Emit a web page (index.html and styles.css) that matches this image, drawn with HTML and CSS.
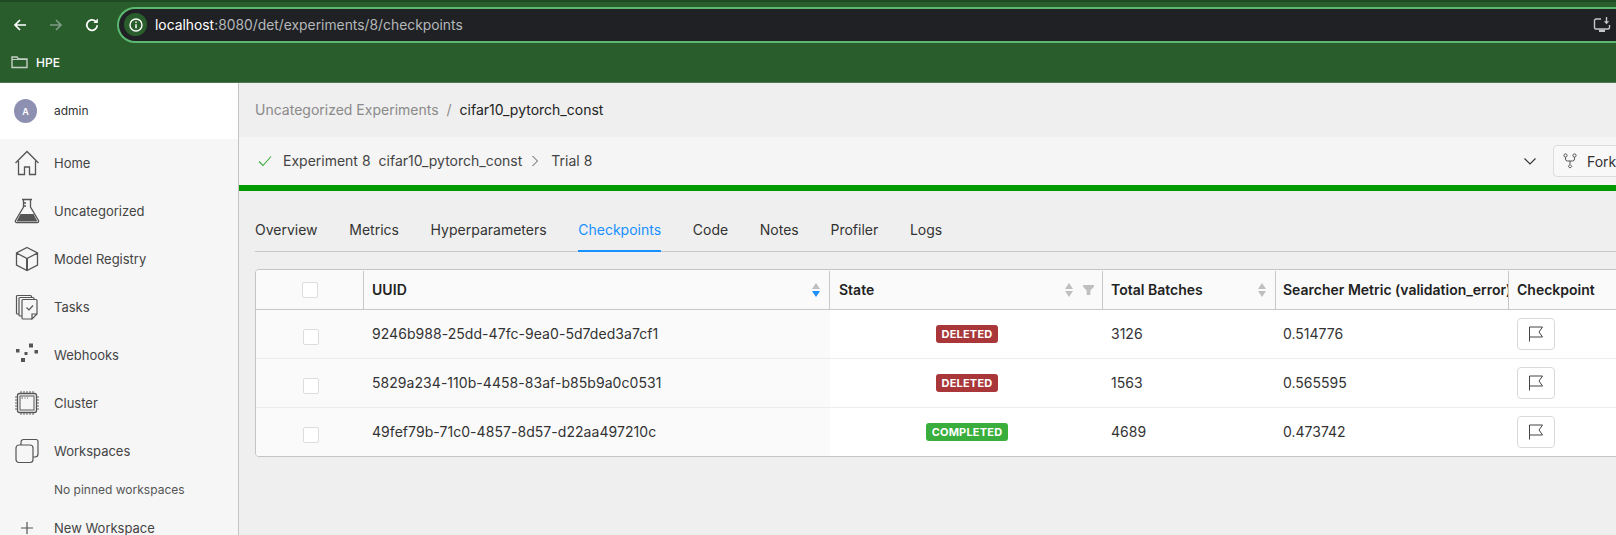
FILE: index.html
```html
<!DOCTYPE html>
<html>
<head>
    <link rel="stylesheet" href="styles.css">
</head>
<body>
    <div class="chrome">
        <div class="toolbar">
            <svg class="nav-btn back" width="16" height="16" viewBox="0 0 16 16"><path d="M14 8H3M8 3L3 8l5 5" fill="none" stroke="#fff" stroke-width="1.7"/></svg>
            <svg class="nav-btn forward" width="16" height="16" viewBox="0 0 16 16"><path d="M2 8h11M8 3l5 5-5 5" fill="none" stroke="#7f9c84" stroke-width="1.7"/></svg>
            <svg class="nav-btn reload" width="16" height="16" viewBox="0 0 16 16"><path d="M13.2 8.2A5.2 5.2 0 1 1 11.6 4.3" fill="none" stroke="#fff" stroke-width="1.7"/><path d="M9.4 5.9h4.4V1.5z" fill="#fff"/></svg>
            <div class="address">
                <span class="site-info">
                    <svg width="16" height="16" viewBox="0 0 16 16"><circle cx="8" cy="8" r="6" fill="none" stroke="#fff" stroke-width="1.4"/><path d="M8 7.2v4M8 4.6v1.5" stroke="#fff" stroke-width="1.5"/></svg>
                </span>
                <span class="url"><b>localhost</b>:8080/det/experiments/8/checkpoints</span>
                <svg class="install" width="18" height="16" viewBox="0 0 18 16"><path d="M8 2H3a1.5 1.5 0 0 0-1.5 1.5v7A1.5 1.5 0 0 0 3 12h12a1.5 1.5 0 0 0 1.500-1.500V8" fill="none" stroke="#c4c6c8" stroke-width="1.4"/><path d="M6 12.500h6V15H6z" fill="#c4c6c8"/><path d="M13.500 0v5" stroke="#c4c6c8" stroke-width="1.400"/><path d="M10.800 4.300h5.400l-2.700 3z" fill="#c4c6c8"/></svg>
            </div>
        </div>
        <div class="bookmarks">
            <svg width="17" height="14" viewBox="0 0 17 14"><path d="M1 12.500V2h5l1.500 2H16v8.500z" fill="none" stroke="#c5cfc6" stroke-width="1.400"/><path d="M1 4.500h15" stroke="#c5cfc6" stroke-width="1"/></svg>
            <span>HPE</span>
        </div>
    </div>

    <div class="app">
        <aside class="sidebar">
            <div class="user">
                <span class="avatar">A</span>
                <span class="user-name">admin</span>
            </div>
            <nav class="side-nav">
                <a class="side-item" href="#">
                    <svg width="26" height="26" viewBox="0 0 26 26"><path d="M1.500 13L13 1.500 24.500 13M4.500 11v13.500h6V17h5v7.500h6V11" fill="none" stroke="#555" stroke-width="1.300"/></svg>
                    Home
                </a>
                <a class="side-item" href="#">
                    <svg width="26" height="26" viewBox="0 0 26 26"><path d="M8 1.500h10M9.500 1.500V9L1.500 22.500a1.500 1.500 0 0 0 1.300 2.200h20.400a1.500 1.500 0 0 0 1.300-2.200L16.500 9V1.500M9.500 5h2.500M9.500 8h2.500" fill="none" stroke="#555" stroke-width="1.300"/><path d="M6.500 16h13l4 7.500H2.500z" fill="#555"/></svg>
                    Uncategorized
                </a>
                <a class="side-item" href="#">
                    <svg width="26" height="26" viewBox="0 0 26 26"><path d="M13 1.500L23.500 7v12L13 24.500 2.500 19V7zM2.500 7L13 12.500 23.500 7" fill="none" stroke="#555" stroke-width="1.300"/><path d="M13 12.500v12" stroke="#555" stroke-width="2"/></svg>
                    Model Registry
                </a>
                <a class="side-item" href="#">
                    <svg width="26" height="26" viewBox="0 0 26 26"><path d="M5 20H3.500a1 1 0 0 1-1-1V2.500a1 1 0 0 1 1-1h13a1 1 0 0 1 1 1V3" fill="none" stroke="#555" stroke-width="1.200"/><path d="M8 22H6a1 1 0 0 1-1-1V4.500a1 1 0 0 1 1-1h13a1 1 0 0 1 1 1V5" fill="none" stroke="#555" stroke-width="1.200"/><path d="M18 25H9a1 1 0 0 1-1-1V6.500a1 1 0 0 1 1-1h13a1 1 0 0 1 1 1V20l-5 5v-5h5" fill="none" stroke="#555" stroke-width="1.200"/><path d="M12.500 13.500l2.500 2.500 4-4.500" fill="none" stroke="#555" stroke-width="1.200"/></svg>
                    Tasks
                </a>
                <a class="side-item" href="#">
                    <svg width="26" height="26" viewBox="0 0 26 26"><path d="M2 7h3.500v3.500H2zM15 1.500h4v4h-4zM20.500 8H24v3.500h-3.500zM10.500 10h3v3h-3zM7 16h4v4H7z" fill="#555"/></svg>
                    Webhooks
                </a>
                <a class="side-item" href="#">
                    <svg width="26" height="26" viewBox="0 0 26 26"><rect x="3.500" y="3.500" width="19" height="19" rx="2" fill="none" stroke="#555" stroke-width="1.300"/><rect x="6" y="6" width="14" height="14" fill="none" stroke="#555" stroke-width="1"/><path d="M7.500 8h1.500M10.500 8h1M13 8h1" stroke="#555" stroke-width="1"/><path d="M7 3.500V1M10 3.500V1M13 3.500V1M16 3.500V1M19 3.500V1M7 25v-2.500M10 25v-2.500M13 25v-2.500M16 25v-2.500M19 25v-2.500M1 7h2.500M1 10h2.500M1 13h2.500M1 16h2.500M1 19h2.500M22.500 7H25M22.500 10H25M22.500 13H25M22.500 16H25M22.500 19H25" stroke="#555" stroke-width="0.900"/></svg>
                    Cluster
                </a>
                <a class="side-item" href="#">
                    <svg width="26" height="26" viewBox="0 0 26 26"><rect x="2" y="7" width="17" height="17.500" rx="3" fill="none" stroke="#555" stroke-width="1.200"/><path d="M7 7V4a2.500 2.500 0 0 1 2.500-2.500h12.500a2 2 0 0 1 2 2V16a3 3 0 0 1-3 3H19" fill="none" stroke="#555" stroke-width="1.200"/></svg>
                    Workspaces
                </a>
                <div class="no-pinned">No pinned workspaces</div>
                <a class="side-item new-workspace" href="#">
                    <svg width="26" height="26" viewBox="0 0 26 26"><path d="M13 7v12M7 13h12" stroke="#555" stroke-width="1.200"/></svg>
                    New Workspace
                </a>
            </nav>
        </aside>

        <main class="content">
            <div class="breadcrumb">
                <span class="crumb-link">Uncategorized Experiments</span>
                <span class="crumb-sep">/</span>
                <span class="crumb-current">cifar10_pytorch_const</span>
            </div>

            <div class="exp-header">
                <svg class="exp-check" width="14" height="14" viewBox="0 0 14 14"><path d="M1 7.500L5 11.500 13 2.500" fill="none" stroke="#3aad3e" stroke-width="1.100"/></svg>
                <span class="exp-text exp-id">Experiment 8</span>
                <span class="exp-text exp-name">cifar10_pytorch_const</span>
                <svg class="exp-arrow" width="10" height="12" viewBox="0 0 10 12"><path d="M2.500 1l5 5-5 5" fill="none" stroke="#555" stroke-width="1"/></svg>
                <span class="exp-text">Trial 8</span>
                <svg class="exp-more" width="14" height="10" viewBox="0 0 14 10"><path d="M1.500 2.500L7 8l5.500-5.500" fill="none" stroke="#333" stroke-width="1.100"/></svg>
                <button class="fork-btn">
                    <svg width="14" height="16" viewBox="0 0 14 16"><circle cx="2.500" cy="2.500" r="1.600" fill="none" stroke="#555"/><circle cx="11.500" cy="2.500" r="1.600" fill="none" stroke="#555"/><path d="M7 11.500l1.800 1.800L7 15.100 5.200 13.300z" fill="none" stroke="#555"/><path d="M2.500 4.200V6a2 2 0 0 0 2 2h5a2 2 0 0 0 2-2V4.200M7 8v3.500" fill="none" stroke="#555"/></svg>
                    Fork
                </button>
            </div>
            <div class="progress"></div>

            <div class="tabs">
                <a class="tab" href="#">Overview</a>
                <a class="tab" href="#">Metrics</a>
                <a class="tab" href="#">Hyperparameters</a>
                <a class="tab active" href="#">Checkpoints</a>
                <a class="tab" href="#">Code</a>
                <a class="tab" href="#">Notes</a>
                <a class="tab" href="#">Profiler</a>
                <a class="tab" href="#">Logs</a>
            </div>

            <div class="table-wrap">
                <div class="row head">
                    <div class="cell c-check"><span class="checkbox"></span></div>
                    <div class="cell c-uuid">UUID
                        <span class="sorter"><i class="up"></i><i class="down on"></i></span>
                    </div>
                    <div class="cell c-state">State
                        <span class="sorter"><i class="up"></i><i class="down"></i></span>
                        <svg class="filter" width="11" height="10" viewBox="0 0 12 11"><path d="M0 0h12v2L8 6v5H4V6L0 2z" fill="#bfbfbf"/></svg>
                    </div>
                    <div class="cell c-batches">Total Batches
                        <span class="sorter"><i class="up"></i><i class="down"></i></span>
                    </div>
                    <div class="cell c-metric"><span class="clip">Searcher Metric (validation_error)</span></div>
                    <div class="cell c-action">Checkpoint</div>
                </div>

                <div class="row">
                    <div class="cell c-check"><span class="checkbox"></span></div>
                    <div class="cell c-uuid">9246b988-25dd-47fc-9ea0-5d7ded3a7cf1</div>
                    <div class="cell c-state"><span class="badge deleted">DELETED</span></div>
                    <div class="cell c-batches">3126</div>
                    <div class="cell c-metric">0.514776</div>
                    <div class="cell c-action"><button class="flag-btn"><svg width="16" height="16" viewBox="0 0 16 16"><path d="M1.500 15.500V1h13l-3.500 5 3.500 5H1.500" fill="none" stroke="#444" stroke-width="1"/></svg></button></div>
                </div>
                <div class="row">
                    <div class="cell c-check"><span class="checkbox"></span></div>
                    <div class="cell c-uuid">5829a234-110b-4458-83af-b85b9a0c0531</div>
                    <div class="cell c-state"><span class="badge deleted">DELETED</span></div>
                    <div class="cell c-batches">1563</div>
                    <div class="cell c-metric">0.565595</div>
                    <div class="cell c-action"><button class="flag-btn"><svg width="16" height="16" viewBox="0 0 16 16"><path d="M1.500 15.500V1h13l-3.500 5 3.500 5H1.500" fill="none" stroke="#444" stroke-width="1"/></svg></button></div>
                </div>
                <div class="row last">
                    <div class="cell c-check"><span class="checkbox"></span></div>
                    <div class="cell c-uuid">49fef79b-71c0-4857-8d57-d22aa497210c</div>
                    <div class="cell c-state"><span class="badge completed">COMPLETED</span></div>
                    <div class="cell c-batches">4689</div>
                    <div class="cell c-metric">0.473742</div>
                    <div class="cell c-action"><button class="flag-btn"><svg width="16" height="16" viewBox="0 0 16 16"><path d="M1.500 15.500V1h13l-3.500 5 3.500 5H1.500" fill="none" stroke="#444" stroke-width="1"/></svg></button></div>
                </div>
            </div>
        </main>
    </div>
</body>
</html>
```

FILE: styles.css
```css
* {
    box-sizing: border-box;
}

html, body {
    margin: 0;
    padding: 0;
    height: 535px;
    overflow: hidden;
}

body {
    font-family: Inter, "Liberation Sans", sans-serif;
    font-size: 14px;
    color: #333;
    background-color: #efefef;
}

a {
    color: inherit;
    text-decoration: none;
}

/* browser bar */
.chrome {
    height: 83px;
    background-color: #295e2c;
    border-top: 2px solid #1f4a23;
    border-bottom: 1px solid #4b7a50;
}

.toolbar {
    height: 40px;
    padding-top: 5px;
    display: flex;
    align-items: center;
}

.nav-btn {
    flex: none;
}

.back {
    margin-left: 12px;
}

.forward {
    margin-left: 20px;
}

.reload {
    margin-left: 20px;
}

.address {
    margin-left: 17px;
    flex: 1;
    height: 36px;
    display: flex;
    align-items: center;
    background-color: #1f2124;
    border: 2px solid #5cb870;
    border-right: none;
    border-radius: 18px 0 0 18px;
    padding-left: 5px;
}

.site-info {
    width: 23px;
    height: 23px;
    border-radius: 50%;
    background-color: #295e2c;
    display: flex;
    align-items: center;
    justify-content: center;
}

.url {
    margin-left: 8px;
    font-size: 13.85px;
    color: #b5b8ba;
}

.url b {
    font-weight: 400;
    color: #fff;
}

.install {
    margin-left: auto;
    margin-right: 5px;
}

.bookmarks {
    height: 38px;
    padding: 2px 0 0 11px;
    display: flex;
    align-items: center;
    gap: 8px;
    color: #fff;
    font-size: 12px;
    font-weight: 500;
}

/* layout */
.app {
    display: flex;
    height: 452px;
}

.sidebar {
    flex: none;
    width: 239px;
    background-color: #f6f6f6;
    border-right: 1px solid #c4c4c4;
}

.user {
    height: 56px;
    background-color: #fff;
    display: flex;
    align-items: center;
    gap: 17px;
    padding-left: 14px;
    font-size: 12px;
}

.user-name {
    margin-bottom: 2px;
}

.avatar {
    width: 23px;
    height: 24px;
    border-radius: 50%;
    background-color: #8e90b1;
    color: #fff;
    font-size: 9px;
    font-weight: 600;
    display: flex;
    align-items: center;
    justify-content: center;
}

.side-item {
    height: 48px;
    display: flex;
    align-items: center;
    gap: 14px;
    padding-left: 14px;
    font-size: 13px;
    color: #444;
}

.no-pinned {
    height: 30px;
    line-height: 30px;
    padding-left: 54px;
    font-size: 12px;
    color: #555;
}

.new-workspace {
    height: 46px;
}

.content {
    flex: 1;
    min-width: 0;
    overflow: hidden;
}

.breadcrumb {
    height: 54px;
    display: flex;
    align-items: center;
    padding: 0 0 2px 16px;
    font-size: 14px;
    color: #222;
}

.crumb-link {
    color: #8a8a8a;
}

.crumb-sep {
    margin: 0 8px;
    color: #8a8a8a;
}

.exp-header {
    height: 48px;
    background-color: #f5f5f5;
    display: flex;
    align-items: center;
    padding-left: 19px;
    font-size: 14px;
    color: #444;
    white-space: nowrap;
    overflow: hidden;
}

.exp-text {
    margin-bottom: 2px;
}

.exp-id {
    margin-left: 11px;
}

.exp-name {
    margin-left: 8px;
}

.exp-arrow {
    margin: 0 11px 0 8px;
}

.exp-more {
    margin-left: auto;
    flex: none;
}

.fork-btn {
    margin: 0 -27px 0 16px;
    flex: none;
    width: 90px;
    height: 32px;
    display: flex;
    align-items: center;
    gap: 10px;
    padding: 0 0 0 9px;
    background-color: #f8f8f8;
    border: 1px solid #ddd;
    border-radius: 4px;
    font: inherit;
    color: #333;
}

.progress {
    height: 6px;
    background-color: #009900;
}

.tabs {
    margin: 0 0 0 16px;
    height: 61px;
    display: flex;
    align-items: flex-end;
    gap: 31.7px;
    border-bottom: 1px solid #c8c8c8;
    font-size: 14px;
    color: #333;
    width: 1400px;
}

.tab {
    height: 44px;
    margin-bottom: -1px;
    display: flex;
    align-items: center;
    border-bottom: 2px solid transparent;
}

.tab.active {
    color: #1890ff;
    border-bottom-color: #1890ff;
}

/* table */
.table-wrap {
    margin: 17px 0 0 16px;
    width: 1400px;
    height: 188px;
    background-color: #fff;
    border: 1px solid #c4c4c4;
    border-radius: 4px;
    overflow: hidden;
}

.row {
    display: flex;
    height: 49px;
    border-bottom: 1px solid #ececec;
}

.row.last {
    height: 48px;
    border-bottom: none;
}

.row.head {
    height: 40px;
    background-color: #fafafa;
    border-bottom: 1px solid #c8c8c8;
    font-weight: 600;
    color: #222;
}

.cell {
    display: flex;
    align-items: center;
    padding-left: 8px;
    padding-bottom: 2px;
    font-size: 14px;
    color: #333;
}

.head .cell {
    color: #222;
    border-right: 1px solid #c8c8c8;
    height: 38px;
    margin-top: 1px;
}

.c-check {
    width: 108px;
    padding: 0 0 0 2px;
    justify-content: center;
    background-color: #fafafa;
}

.c-uuid {
    width: 466px;
    background-color: #fafafa;
    letter-spacing: 0.05px;
}

.head .c-uuid, .head .c-state, .head .c-batches {
    position: relative;
}

.c-state {
    width: 273px;
}

.row .c-state {
    justify-content: center;
    padding: 0 0 0 1px;
}

.row.head .c-state {
    justify-content: flex-start;
    padding: 0 0 2px 9px;
}

.c-batches {
    width: 173px;
}

.c-metric {
    width: 233px;
    padding-left: 7px;
}

.c-action {
    flex: 1;
    padding: 0 0 0 8px;
}

.head .c-action {
    border-right: none;
    padding-bottom: 2px;
}

.head .c-check {
    background-color: transparent;
    padding: 0;
}

.head .c-uuid {
    background-color: transparent;
}

.clip {
    overflow: hidden;
    white-space: nowrap;
}

.checkbox {
    width: 16px;
    height: 16px;
    background-color: #fff;
    border: 1px solid #ddd;
    border-radius: 2px;
}

.row:not(.head) .checkbox {
    margin-top: 6px;
}

.sorter {
    position: absolute;
    right: 9px;
    top: 12px;
    display: flex;
    flex-direction: column;
    gap: 2px;
}

.c-state .sorter {
    right: 29px;
}

.sorter i {
    display: block;
    width: 0;
    height: 0;
    border-left: 4px solid transparent;
    border-right: 4px solid transparent;
}

.sorter .up {
    border-bottom: 6px solid #bfbfbf;
}

.sorter .down {
    border-top: 6px solid #bfbfbf;
}

.sorter .down.on {
    border-top-color: #1890ff;
}

.filter {
    position: absolute;
    right: 8px;
    top: 14px;
}

.badge {
    height: 18px;
    line-height: 18px;
    padding: 0 6px;
    border-radius: 3px;
    color: #fff;
    font-size: 11px;
    font-weight: 700;
    letter-spacing: 0.2px;
}

.deleted {
    background-color: #a9373a;
}

.completed {
    background-color: #3aae3c;
}

.flag-btn {
    width: 38px;
    height: 32px;
    padding: 0;
    display: flex;
    align-items: center;
    justify-content: center;
    background-color: #fff;
    border: 1px solid #d9d9d9;
    border-radius: 4px;
}
```
